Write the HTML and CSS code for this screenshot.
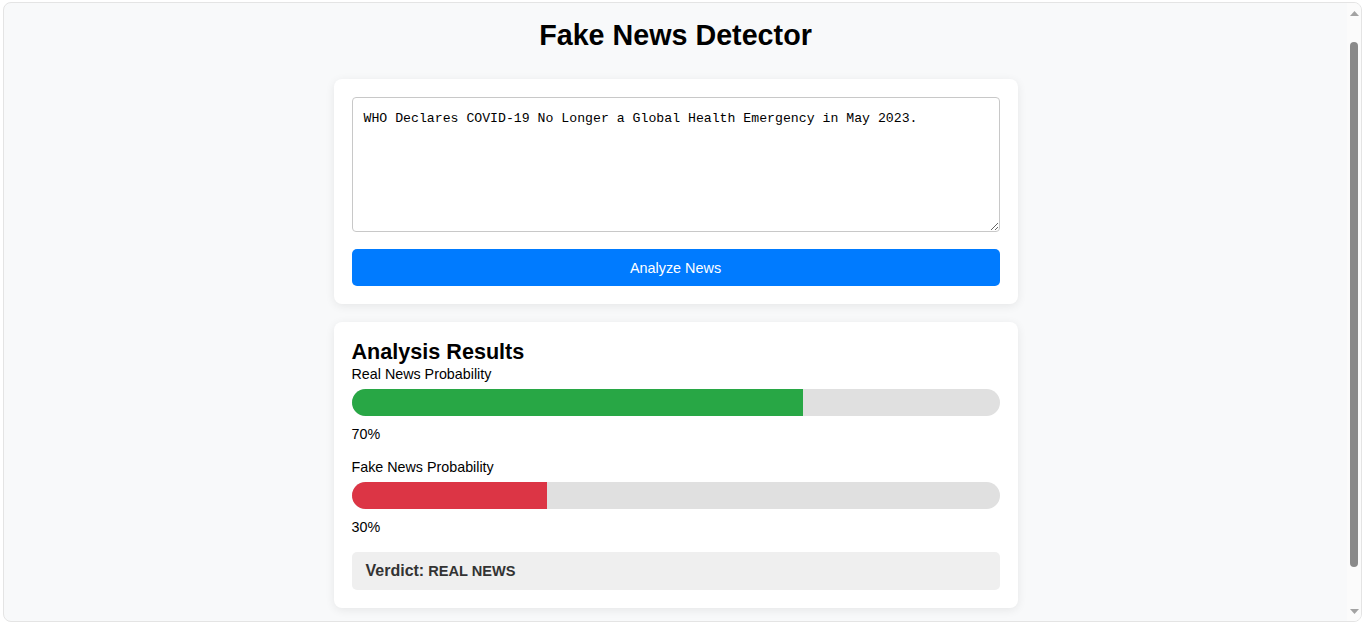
FILE: index.html
```html
<!DOCTYPE html>
<html lang="en">
<head>
<meta charset="utf-8">
<title>Fake News Detector</title>
<link rel="stylesheet" href="styles.css">
</head>
<body>
<div class="frame">
  <main class="page">
    <h1 class="title">Fake News Detector</h1>
    <section class="card">
      <textarea class="news-input">WHO Declares COVID-19 No Longer a Global Health Emergency in May 2023.</textarea>
      <button class="analyze-btn" type="button">Analyze News</button>
    </section>
    <section class="card results">
      <h2 class="results-title">Analysis Results</h2>
      <div class="metric">
        <div class="metric-label">Real News Probability</div>
        <div class="bar"><div class="bar-fill bar-real" style="width: 69.6%"></div></div>
        <div class="metric-value">70%</div>
      </div>
      <div class="metric">
        <div class="metric-label">Fake News Probability</div>
        <div class="bar"><div class="bar-fill bar-fake" style="width: 30.2%"></div></div>
        <div class="metric-value">30%</div>
      </div>
      <div class="verdict"><strong class="verdict-key">Verdict:</strong> <span class="verdict-value">REAL NEWS</span></div>
    </section>
  </main>
  <div class="scrollbar" aria-hidden="true">
    <div class="sb-btn sb-up">
      <svg width="9" height="5" viewBox="0 0 9 5"><path d="M0 5 L4.5 0 L9 5 Z" fill="#a3a3a3"/></svg>
    </div>
    <div class="sb-thumb"></div>
    <div class="sb-space"></div>
    <div class="sb-btn sb-down">
      <svg width="9" height="5" viewBox="0 0 9 5"><path d="M0 0 L9 0 L4.5 5 Z" fill="#a3a3a3"/></svg>
    </div>
  </div>
</div>
</body>
</html>
```

FILE: styles.css
```css
* { box-sizing: border-box; }

html, body {
  margin: 0;
  padding: 0;
  background: #ffffff;
  height: 100%;
}

body {
  padding: 2px 4px 1px 3px;
  font-family: "Liberation Sans", Arial, sans-serif;
  color: #000;
}

.frame {
  height: 620px;
  border: 1px solid #e4e4e4;
  border-radius: 8px;
  background: #f8f9fa;
  display: flex;
  overflow: hidden;
}

.page {
  flex: 1;
  padding-top: 16px;
  overflow: hidden;
}

.title {
  margin: 0 0 27px;
  text-align: center;
  font-size: 28.7px;
  line-height: 33px;
  font-weight: bold;
}

.card {
  width: 684px;
  margin: 0 auto 18px;
  background: #fff;
  border-radius: 8px;
  padding: 18px;
  box-shadow: 0 2px 10px rgba(0, 0, 0, 0.08);
}

.news-input {
  display: block;
  width: 100%;
  height: 135px;
  margin: 0 0 17px;
  padding: 13px 10px 10px 11px;
  border: 1px solid #c8c8c8;
  border-radius: 4px;
  font-family: "Liberation Mono", monospace;
  font-size: 13.2px;
  color: #000;
  background: #fff;
}

.analyze-btn {
  display: block;
  width: 100%;
  height: 37px;
  border: none;
  border-radius: 5px;
  background: #007bff;
  color: #fff;
  font-family: "Liberation Sans", Arial, sans-serif;
  font-size: 14.4px;
  padding: 0;
}

.results-title {
  margin: 0;
  font-size: 21.6px;
  line-height: 24px;
  font-weight: bold;
}

.metric-label {
  margin-top: 2px;
  font-size: 14.3px;
  line-height: 16px;
}

.metric + .metric .metric-label {
  margin-top: 17px;
}

.bar {
  margin-top: 7px;
  height: 27px;
  background: #e0e0e0;
  border-radius: 14px;
  overflow: hidden;
  display: flex;
}

.bar-fill { height: 100%; }
.bar-real { background: #28a745; }
.bar-fake { background: #dc3545; }

.metric-value {
  margin-top: 10px;
  font-size: 14.3px;
  line-height: 16px;
}

.verdict {
  margin-top: 17px;
  height: 38px;
  display: flex;
  align-items: center;
  gap: 4px;
  padding: 0 14px;
  background: #efefef;
  border-radius: 5px;
  color: #333;
  font-weight: bold;
}

.verdict-key { font-size: 16px; }
.verdict-value { font-size: 14.6px; }

.scrollbar {
  width: 14px;
  display: flex;
  flex-direction: column;
  align-items: center;
  background: #fbfbfb;
}

.sb-btn {
  height: 20px;
  width: 100%;
  display: flex;
  align-items: center;
  justify-content: center;
}

.sb-thumb {
  margin-top: 19px;
  width: 8px;
  height: 525px;
  border-radius: 4px;
  background: #8a8a8a;
}

.sb-space { flex: 1; }
```
